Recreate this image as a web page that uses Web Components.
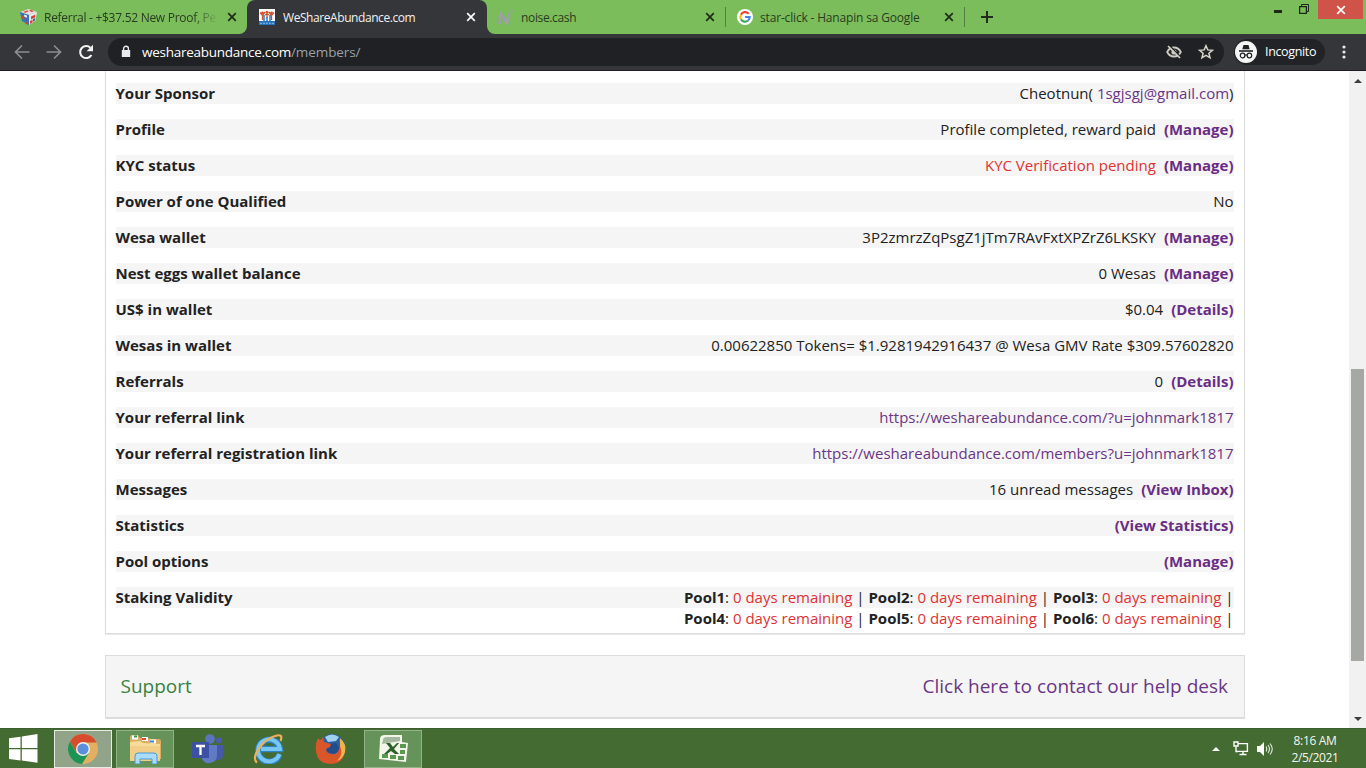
<!DOCTYPE html>
<html lang="en">
<head>
<meta charset="utf-8">
<title>WeShareAbundance.com</title>
<style>
    html, body {
        margin: 0;
        height: 100%;
        overflow: hidden;
        font-family: "Open Sans", "Noto Sans", sans-serif;
    }
</style>
</head>
<body>
<desktop-screen></desktop-screen>

<script>
/** <svg> icons shared by the components below */
const ICONS = {
    cube: `<svg width="17" height="16" viewBox="0 0 17 16"><path d="M0 3L8.500 0 17 3 9 6z" fill="#e9dfe4"/><path d="M0 3l9 3v10l-7-4z" fill="#3a72b5"/><path d="M17 3L9 6v10l6.500-4.500z" fill="#e6ebf4"/><path d="M3 3l4-1.600 2 .7L5.500 3.700zM9 1.600l2-.6 3 1.200-2.500.8zM11 7.500l4.500-2-.5 3-4 2zM10 12l2.600-1.200v2.500L10 15z" fill="#dd4232"/><path d="M1 6l3 1.500.5 3L2 9.500zM5 12l3 1.500V16l-3-1.800z" fill="#dd4232"/><path d="M4 5.500l3 1v2.300L4.300 7.700z" fill="#e6edf5"/><path d="M13 10l2.300-1-.4 2.400-1.900 1.300z" fill="#3367ad"/></svg>`,
    people: `<svg width="16" height="16" viewBox="0 0 16 16"><path fill="#fff" d="M0 0h16v16H0z"/><path fill="#2774be" d="M0 12h16v4H0z"/><path fill="#5b9bd8" d="M4 6h2v6H4zM10 6h2v6h-2zM7 8h2v4H7z"/><g fill="none" stroke="#d2512f" stroke-width="1.300"><path d="M1 3.500l2.500 3L6 3M10 3l2.500 3.500 2.500-3M6 6l2-1 2 1M3.500 6v5M12.500 6v5M8 5v4"/></g><g fill="#d2512f"><circle cx="3.500" cy="3.800" r="1.400"/><circle cx="8" cy="3.200" r="1.500"/><circle cx="12.500" cy="3.800" r="1.400"/></g><path d="M1 14.300h14" stroke="#a8cdf0" stroke-dasharray="2 1" stroke-width=".8"/></svg>`,
    noise: `<svg width="17" height="17" viewBox="0 0 17 17" fill="none"><path d="M2.500 15l1-10 6.500 9L12 4" stroke="#8fa394" stroke-width="3"/><path d="M2.500 15l1-10 6.500 9L12 4" stroke="#a99fb5" stroke-width="2" stroke-dasharray="1.300 1"/><path d="M14 4l2-3M12.500 2.500L13 1" stroke="#9aa59d" stroke-width="1.200"/></svg>`,
    google: `<svg width="16" height="16" viewBox="0 0 16 16"><circle cx="8" cy="8" r="8" fill="#fff"/><g fill="none" stroke-width="2.100"><path d="M11.600 4.700A4.700 4.700 0 0 0 3.900 5.700" stroke="#ea4335"/><path d="M3.900 5.700a4.700 4.700 0 0 0 0 4.600" stroke="#fbbc05"/><path d="M3.900 10.300a4.700 4.700 0 0 0 7.200 1.200" stroke="#34a853"/><path d="M11.100 11.500A4.500 4.500 0 0 0 12.700 8H8" stroke="#4285f4"/></g></svg>`,
    close: `<svg width="10" height="10" viewBox="0 0 10 10"><path d="M1.200 1.200l7.600 7.600M8.800 1.200L1.200 8.800" stroke="currentColor" stroke-width="1.700"/></svg>`,
    plus: `<svg width="12" height="12" viewBox="0 0 12 12"><path d="M6 0v12M0 6h12" stroke="#222b1d" stroke-width="2"/></svg>`,
    back: `<svg width="16" height="16" viewBox="0 0 16 16"><path d="M15.500 8H2M8 1.500L1.500 8 8 14.500" stroke="#8b8d90" stroke-width="1.700" fill="none"/></svg>`,
    forward: `<svg width="16" height="16" viewBox="0 0 16 16"><path d="M.5 8H14M8 1.500L14.500 8 8 14.500" stroke="#8b8d90" stroke-width="1.700" fill="none"/></svg>`,
    reload: `<svg width="16" height="16" viewBox="0 0 16 16"><path d="M13.400 11A6 6 0 1 1 12.400 3.800" stroke="#f4f4f4" stroke-width="2.100" fill="none"/><path d="M15 .8v6.400H8.600z" fill="#f4f4f4"/></svg>`,
    lock: `<svg width="10" height="13" viewBox="0 0 10 13"><path d="M.8 5h8.400v7H.8z" fill="#e8eaed"/><path d="M2.600 5.500V3.600a2.400 2.400 0 0 1 4.800 0v1.900" fill="none" stroke="#e8eaed" stroke-width="1.400"/></svg>`,
    eye: `<svg width="16" height="16" viewBox="0 0 16 16" fill="none" stroke="#cfccc5"><path d="M1.200 8c1.500-3 4-4.500 6.800-4.500S13.300 5 14.800 8c-1.500 3-4 4.500-6.800 4.500S2.700 11 1.200 8z" stroke-width="1.800"/><circle cx="8" cy="8" r="2.600" fill="#cfccc5" stroke="none"/><path d="M3.300 1.500l11.200 11.200" stroke="#202124" stroke-width="1.600"/><path d="M2 2l12 12" stroke-width="1.700"/></svg>`,
    star: `<svg width="16" height="16" viewBox="0 0 16 16"><path d="M8 1.700l1.800 4.200 4.600.4-3.500 3 1.100 4.500L8 11.400l-4 2.400 1.100-4.500-3.500-3 4.600-.4z" fill="none" stroke="#d8d5ca" stroke-width="1.500"/></svg>`,
    spy: `<svg width="22" height="22" viewBox="0 0 22 22"><circle cx="11" cy="11" r="11" fill="#f5f5f5"/><path d="M7.300 8.200L8.500 4h5l1.200 4.200z" fill="#202124"/><path d="M4 10h14" stroke="#202124" stroke-width="1.600"/><g fill="none" stroke="#202124" stroke-width="1.200"><circle cx="7.600" cy="14.500" r="2.300"/><circle cx="14.400" cy="14.500" r="2.300"/><path d="M9.900 14.200q1.100-.7 2.200 0"/></g></svg>`,
    dots: `<svg width="4" height="14" viewBox="0 0 4 14" fill="#e8eaed"><circle cx="2" cy="2" r="1.600"/><circle cx="2" cy="7" r="1.600"/><circle cx="2" cy="12" r="1.600"/></svg>`,
    min: `<svg width="8" height="3" viewBox="0 0 8 3"><path d="M0 0h8v3H0z" fill="#1d2818"/></svg>`,
    restore: `<svg width="10" height="10" viewBox="0 0 10 10" fill="none" stroke="#1d2818"><path d="M2.500 2V.5h7v7H8"/><path d="M.6 2.600h6.800v6.800H.6z" stroke-width="1.300"/></svg>`,
    windows: `<svg width="29" height="29" viewBox="0 0 29 29" fill="#fff"><path d="M0 4.300l11.500-1.600V14H0zM12.800 2.500L28.500 0v14H12.800zM0 15.300h11.500v11.200L0 24.900zM12.800 15.300h15.700v13.400L12.800 26.500z"/></svg>`,
    chrome: `<svg width="30" height="30" viewBox="0 0 30 30"><circle cx="15" cy="15" r="15" fill="#e3b062"/><path d="M2 7.500A15 15 0 0 1 28.500 8.500H15l-6.500 10z" fill="#d84c2c"/><path d="M2 7.500A15 15 0 0 0 14 30l7-11.200-12.500.2z" fill="#1b9455"/><circle cx="15" cy="15" r="7" fill="#f2f2f2"/><circle cx="15" cy="15" r="5.600" fill="#5a8fdb"/></svg>`,
    explorer: `<svg width="32" height="30" viewBox="0 0 32 30"><path d="M1 3q0-2 2-2h6l2 3h8l3 1h8q2 0 2 2v18H1z" fill="#dcae63"/><path d="M3 1.500h6v4H3zM13 3h6v4h-6zM21 5.500h6v4h-6z" fill="#fff"/><path d="M5 1.500h3v2H5z" fill="#2e9e50"/><path d="M13 4h4v2h-4z" fill="#db4b38"/><path d="M21 6.500h4v2h-4z" fill="#3a80cf"/><path d="M1 8l10-1 3 2 17 1v17H1z" fill="#f7dc99"/><path d="M1 12h30v15H1z" fill="#f2cf88"/><path d="M6 30v-8q0-3 3-3h16q3 0 3 3v8h-5v-5H11v5z" fill="#a9dcf8" stroke="#4b9ad4"/></svg>`,
    teams: `<svg width="31" height="30" viewBox="0 0 31 30"><circle cx="18" cy="5" r="4.800" fill="#5c74be"/><circle cx="27" cy="6.500" r="3" fill="#4a5cab"/><path d="M22 11h9v10q0 5-6 5h-3z" fill="#4659a6"/><path d="M10 11h15v10a8 8 0 0 1-15 4z" fill="#607ac6"/><path d="M0 8h17v16H0z" fill="#3c51a4"/><path d="M4 12h9M8.500 12v9" stroke="#fff" stroke-width="2.300"/></svg>`,
    ie: `<svg width="32" height="30" viewBox="0 0 32 30" fill="none"><path d="M26.500 20.500A11 11 0 1 1 27 15H9" stroke="#2c83c6" stroke-width="6.400"/><path d="M26.500 20A11 11 0 1 1 27 15H8" stroke="#78c6f2" stroke-width="4"/><path d="M4 28.500C-3 24 9 6 22 2c6-2 7.500 0 5.500 5" stroke="#f0b05a" stroke-width="2.200"/></svg>`,
    firefox: `<svg width="32" height="31" viewBox="0 0 32 31"><circle cx="17" cy="14" r="13" fill="#2b609f"/><path d="M10 4q7-5 14 0l-3 4-8 1z" fill="#9fd0ee"/><path d="M12 11l9-1 4 6-5 5-8-2z" fill="#224c8b"/><path d="M3 5q1 2 3 2l2-3 1 5 7 2-1 3-4 2q0 4 5 5 7 1 8-5 2-4 0-10 7 5 6 13-2 11-13 12Q2 31 1 18 0 11 3 5z" fill="#d8562a"/><path d="M25 5q7 6 5 14-2 7-8 9 7-7 3-15z" fill="#eeb34b"/></svg>`,
    excel: `<svg width="31" height="30" viewBox="0 0 31 30"><path d="M2 5Q2 1 7 1h17v7l6 1-2 19L1 25z" fill="#f3f4ea"/><path d="M5 6q0-3 4-3h13v4L4 10z" fill="#a6b7a0"/><path d="M8 9h4l3 4 4-4h2l-5 6 5 5h-4l-4-3-4 3H6l6-6z" fill="#2b612a"/><g fill="#5a984f"><path d="M22 10h6v4h-6zM22 16h5v4h-5zM4 20h6v4H4zM12 21h6v4h-6zM20 22h6v4h-6z"/></g></svg>`,
    up: `<svg width="8" height="4" viewBox="0 0 8 4"><path d="M0 4l4-4 4 4z" fill="currentColor"/></svg>`,
    down: `<svg width="8" height="4" viewBox="0 0 8 4"><path d="M0 0l4 4 4-4z" fill="currentColor"/></svg>`,
    network: `<svg width="16" height="15" viewBox="0 0 16 15" fill="none" stroke="#fff" stroke-width="1.400"><path d="M5 2.600h9.400v7.800H5M10 10.500V13M6.500 13.500h7M3 5.500v5h2"/><path d="M1 1h4v4H1z"/></svg>`,
    sound: `<svg width="16" height="14" viewBox="0 0 16 14"><path d="M0 4h3l4-4v14l-4-4H0z" fill="#fff"/><path d="M9 4.500q1.500 2.500 0 5M11 3q3 4 0 8M13 1.500q4.500 5.500 0 11" fill="none" stroke="#e4eddf" stroke-width="1.100"/></svg>`
};

/** Base class: opens the shadow root and writes the template in it */
class BaseElement extends HTMLElement {
    constructor() {
        super();
        this.attachShadow({ mode: 'open' });
    }

    connectedCallback() {
        this.shadowRoot.innerHTML = this.template();
    }
}

/** <ui-icon name="..."> */
class UiIcon extends BaseElement {
    template() {
        return `
            <style>
                :host { display: block; flex: none; line-height: 0; }
                svg { display: block; }
            </style>
            ${ICONS[this.getAttribute('name')]}
        `;
    }
}

/** <browser-tab icon active cut> title in the slot */
class BrowserTab extends BaseElement {
    template() {
        return `
            <style>
                :host {
                    box-sizing: border-box;
                    display: flex;
                    align-items: center;
                    height: 34px;
                    padding: 0 10px 0 12px;
                    color: #293c20;
                    font-size: 12px;
                }
                :host([active]) {
                    padding-right: 11px;
                    background: #35363a;
                    color: #f1f1f1;
                    border-radius: 8px 8px 0 0;
                }
                span {
                    flex: 1;
                    margin-left: 7px;
                    overflow: hidden;
                    white-space: nowrap;
                }
                :host([active]) span { margin-left: 8px; }
                :host([cut]) span {
                    -webkit-mask-image: linear-gradient(90deg, #000 86%, transparent);
                    mask-image: linear-gradient(90deg, #000 86%, transparent);
                }
                ui-icon.x { color: #1f2b19; margin-left: 9px; }
                :host([active]) ui-icon.x { color: #fff; }
            </style>
            <ui-icon name="${this.getAttribute('icon')}"></ui-icon>
            <span><slot></slot></span>
            <ui-icon class="x" name="close"></ui-icon>
        `;
    }
}

/** Tab strip with the window buttons */
class TabStrip extends BaseElement {
    template() {
        return `
            <style>
                :host { display: flex; height: 34px; background: #7cbd5b; }
                /* the neighbours are cut round, so the active tab gets its curved feet */
                .wrap { background: #35363a; display: flex; }
                .left, .right { background: #7cbd5b; }
                .left { border-radius: 0 0 8px 0; width: 247px; padding-left: 8px; box-sizing: border-box; }
                .right { border-radius: 0 0 0 8px; width: 238px; box-sizing: border-box; }
                .right browser-tab { padding-left: 10px; padding-right: 10px; }
                .mid { background: linear-gradient(#7cbd5b 17px, #35363a 17px); width: 240px; }
                .line { width: 1px; height: 20px; background: #557f40; margin-top: 7px; }
                .last { width: 238px; }
                .last browser-tab { padding-left: 11px; }
                .plus { margin: 11px 0 0 16px; }
                .win { margin-left: auto; display: flex; }
                .min { margin: 10px 17px 0 0; }
                .restore { margin: 4px 9px 0 0; }
                .close {
                    width: 45px; height: 19px; margin-right: 3px;
                    background: #cf5348; color: #fff;
                    display: flex; align-items: center; justify-content: center;
                }
            </style>
            <div class="wrap">
                <div class="left"><browser-tab cut icon="cube" style="letter-spacing:-.28px">Referral - +$37.52 New Proof, Peer</browser-tab></div>
                <div class="mid"><browser-tab active icon="people" style="letter-spacing:-.43px">WeShareAbundance.com</browser-tab></div>
                <div class="right"><browser-tab icon="noise" style="letter-spacing:-.35px">noise.cash</browser-tab></div>
            </div>
            <div class="line"></div>
            <div class="last"><browser-tab icon="google" style="letter-spacing:-.17px">star-click - Hanapin sa Google</browser-tab></div>
            <div class="line"></div>
            <ui-icon class="plus" name="plus"></ui-icon>
            <div class="win">
                <ui-icon class="min" name="min"></ui-icon>
                <ui-icon class="restore" name="restore"></ui-icon>
                <div class="close"><ui-icon name="close"></ui-icon></div>
            </div>
        `;
    }
}

/** Navigation buttons, address and incognito chip */
class BrowserToolbar extends BaseElement {
    template() {
        return `
            <style>
                :host {
                    box-sizing: border-box;
                    display: flex;
                    align-items: center;
                    height: 37px;
                    padding: 0 20px 1px 14px;
                    background: #35363a;
                    border-bottom: 1px solid #211c22;
                }
                .nav { display: flex; gap: 16px; }
                .address {
                    box-sizing: border-box;
                    display: flex;
                    align-items: center;
                    width: 1116px;
                    height: 28px;
                    margin-left: 14px;
                    padding: 0 10px 0 13px;
                    border-radius: 14px;
                    background: #202124;
                    color: #fff;
                    font-size: 13.500px;
                    letter-spacing: -.27px;
                }
                .url { flex: 1; margin-left: 11px; }
                .url i { color: #9aa0a6; font-style: normal; letter-spacing: -.1px; }
                .star { margin-left: 16px; }
                .chip {
                    box-sizing: border-box;
                    display: flex;
                    align-items: center;
                    width: 91px;
                    height: 26px;
                    margin-left: 10px;
                    padding-left: 1px;
                    border-radius: 13px;
                    background: #222326;
                    color: #fff;
                    font-size: 12.500px;
                    letter-spacing: -.35px;
                }
                .chip span { margin-left: 8px; }
                .dots { margin-left: auto; }
            </style>
            <div class="nav">
                <ui-icon name="back"></ui-icon>
                <ui-icon name="forward"></ui-icon>
                <ui-icon name="reload"></ui-icon>
            </div>
            <div class="address">
                <ui-icon name="lock"></ui-icon>
                <div class="url">weshareabundance.com<i>/members/</i></div>
                <ui-icon name="eye"></ui-icon>
                <ui-icon class="star" name="star"></ui-icon>
            </div>
            <div class="chip"><ui-icon name="spy"></ui-icon><span>Incognito</span></div>
            <ui-icon class="dots" name="dots"></ui-icon>
        `;
    }
}

/** <info-row label="..."> value in the slot */
class InfoRow extends BaseElement {
    template() {
        return `
            <style>
                :host {
                    display: flex;
                    justify-content: space-between;
                    line-height: 21px;
                    background: linear-gradient(#f5f5f5, #f5f5f5) no-repeat 0 0 / 100% 21px;
                    white-space: nowrap;
                }
                .label { font-weight: 700; }
                .value { text-align: right; }
            </style>
            <div class="label">${this.getAttribute('label')}</div>
            <div class="value"><slot></slot></div>
        `;
    }
}

/** Account table of the member */
class MemberCard extends BaseElement {
    template() {
        return `
            <style>
                :host {
                    box-sizing: border-box;
                    display: flex;
                    flex-direction: column;
                    gap: 15px;
                    padding: 12px 10.500px 4px 9.500px;
                    border: 1px solid #dcdcde;
                    border-top: 0;
                    box-shadow: 0 1px 1px #ececec;
                    color: #222;
                    font-size: 15px;
                }
            </style>
            <slot></slot>
        `;
    }
}

/** Help desk line */
class SupportCard extends BaseElement {
    template() {
        return `
            <style>
                :host {
                    box-sizing: border-box;
                    display: flex;
                    align-items: center;
                    justify-content: space-between;
                    height: 64px;
                    margin-top: 21px;
                    padding: 0 16px 1px 14.500px;
                    border: 1px solid #dcdcde;
                    border-bottom-width: 2px;
                    background: #f5f5f5;
                    font-size: 19px;
                }
                .name { color: #388240; }
                .desk { color: #6b3585; }
            </style>
            <div class="name">Support</div>
            <div class="desk">Click here to contact our help desk</div>
        `;
    }
}

/** Vertical scrollbar of the page */
class PageScrollbar extends BaseElement {
    template() {
        return `
            <style>
                :host {
                    box-sizing: border-box;
                    display: flex;
                    flex-direction: column;
                    align-items: center;
                    width: 17px;
                    padding: 8px 0 7px;
                    background: #f1f1f1;
                    color: #3c3c3c;
                }
                .thumb { width: 13px; height: 292px; margin-top: 286px; background: #a6a8a4; }
                .down { margin-top: auto; }
            </style>
            <ui-icon name="up"></ui-icon>
            <div class="thumb"></div>
            <ui-icon class="down" name="down"></ui-icon>
        `;
    }
}

/** <task-button icon open|current> */
class TaskButton extends BaseElement {
    template() {
        return `
            <style>
                :host {
                    box-sizing: border-box;
                    display: flex;
                    align-items: center;
                    justify-content: center;
                    width: 58px;
                    height: 38px;
                    border: 1px solid transparent;
                }
                :host([open]) { background: #65935a; border-color: #93b287; }
                :host([current]) { background: #91a489; border-color: #e6ece3; }
            </style>
            <ui-icon name="${this.getAttribute('icon')}"></ui-icon>
        `;
    }
}

/** Windows taskbar */
class TaskBar extends BaseElement {
    template() {
        return `
            <style>
                :host {
                    box-sizing: border-box;
                    display: flex;
                    align-items: center;
                    height: 40px;
                    padding: 0 26px 0 9px;
                    background: #446b31;
                    border-top: 1px solid #3d5f2f;
                    color: #f4f7f2;
                }
                .apps { display: flex; gap: 4px; margin-left: 16px; }
                .tray { display: flex; align-items: center; margin-left: auto; }
                .net { margin-left: 13px; }
                .snd { margin-left: 8px; }
                .clock {
                    width: 50px;
                    margin-left: 17px;
                    font-size: 12px;
                    line-height: 17px;
                    letter-spacing: -.35px;
                    text-align: center;
                    white-space: nowrap;
                }
            </style>
            <ui-icon name="windows"></ui-icon>
            <div class="apps">
                <task-button current icon="chrome"></task-button>
                <task-button open icon="explorer"></task-button>
                <task-button icon="teams"></task-button>
                <task-button icon="ie"></task-button>
                <task-button icon="firefox"></task-button>
                <task-button open icon="excel"></task-button>
            </div>
            <div class="tray">
                <ui-icon name="up"></ui-icon>
                <ui-icon class="net" name="network"></ui-icon>
                <ui-icon class="snd" name="sound"></ui-icon>
                <div class="clock">8:16 AM<br>2/5/2021</div>
            </div>
        `;
    }
}

/** Whole screen: browser window above the taskbar */
class DesktopScreen extends BaseElement {
    template() {
        return `
            <style>
                :host { display: flex; flex-direction: column; width: 1366px; height: 768px; background: #fff; }
                main { display: flex; height: 657px; }
                .page { flex: 1; padding: 0 104px 0 105px; }
                a { color: #6b3585; text-decoration: none; }
                a.strong { color: #6b2c84; font-weight: 700; margin-left: 8px; }
                .red { color: #dd3333; }
                b { font-weight: 700; }
            </style>
            <tab-strip></tab-strip>
            <browser-toolbar></browser-toolbar>
            <main>
                <div class="page">
                    <member-card>
                        <info-row label="Your Sponsor">Cheotnun( <a>1sgjsgj@gmail.com</a>)</info-row>
                        <info-row label="Profile">Profile completed, reward paid<a class="strong">(Manage)</a></info-row>
                        <info-row label="KYC status"><span class="red">KYC Verification pending</span><a class="strong">(Manage)</a></info-row>
                        <info-row label="Power of one Qualified">No</info-row>
                        <info-row label="Wesa wallet">3P2zmrzZqPsgZ1jTm7RAvFxtXPZrZ6LKSKY<a class="strong">(Manage)</a></info-row>
                        <info-row label="Nest eggs wallet balance">0 Wesas<a class="strong">(Manage)</a></info-row>
                        <info-row label="US$ in wallet">$0.04<a class="strong">(Details)</a></info-row>
                        <info-row label="Wesas in wallet">0.00622850 Tokens= $1.9281942916437 @ Wesa GMV Rate $309.57602820</info-row>
                        <info-row label="Referrals">0<a class="strong">(Details)</a></info-row>
                        <info-row label="Your referral link"><a>https://weshareabundance.com/?u=johnmark1817</a></info-row>
                        <info-row label="Your referral registration link"><a>https://weshareabundance.com/members?u=johnmark1817</a></info-row>
                        <info-row label="Messages">16 unread messages<a class="strong">(View Inbox)</a></info-row>
                        <info-row label="Statistics"><a class="strong">(View Statistics)</a></info-row>
                        <info-row label="Pool options"><a class="strong">(Manage)</a></info-row>
                        <info-row label="Staking Validity">${this.pools(1)}<br>${this.pools(4)}</info-row>
                    </member-card>
                    <support-card></support-card>
                </div>
                <page-scrollbar></page-scrollbar>
            </main>
            <task-bar></task-bar>
        `;
    }

    /** Three pools in one line, starting with the given number */
    pools(first) {
        return [first, first + 1, first + 2]
            .map(n => `<b>Pool${n}</b>: <span class="red">0 days remaining</span> |`)
            .join(' ');
    }
}

customElements.define('ui-icon', UiIcon);
customElements.define('browser-tab', BrowserTab);
customElements.define('tab-strip', TabStrip);
customElements.define('browser-toolbar', BrowserToolbar);
customElements.define('info-row', InfoRow);
customElements.define('member-card', MemberCard);
customElements.define('support-card', SupportCard);
customElements.define('page-scrollbar', PageScrollbar);
customElements.define('task-button', TaskButton);
customElements.define('task-bar', TaskBar);
customElements.define('desktop-screen', DesktopScreen);
</script>
</body>
</html>
